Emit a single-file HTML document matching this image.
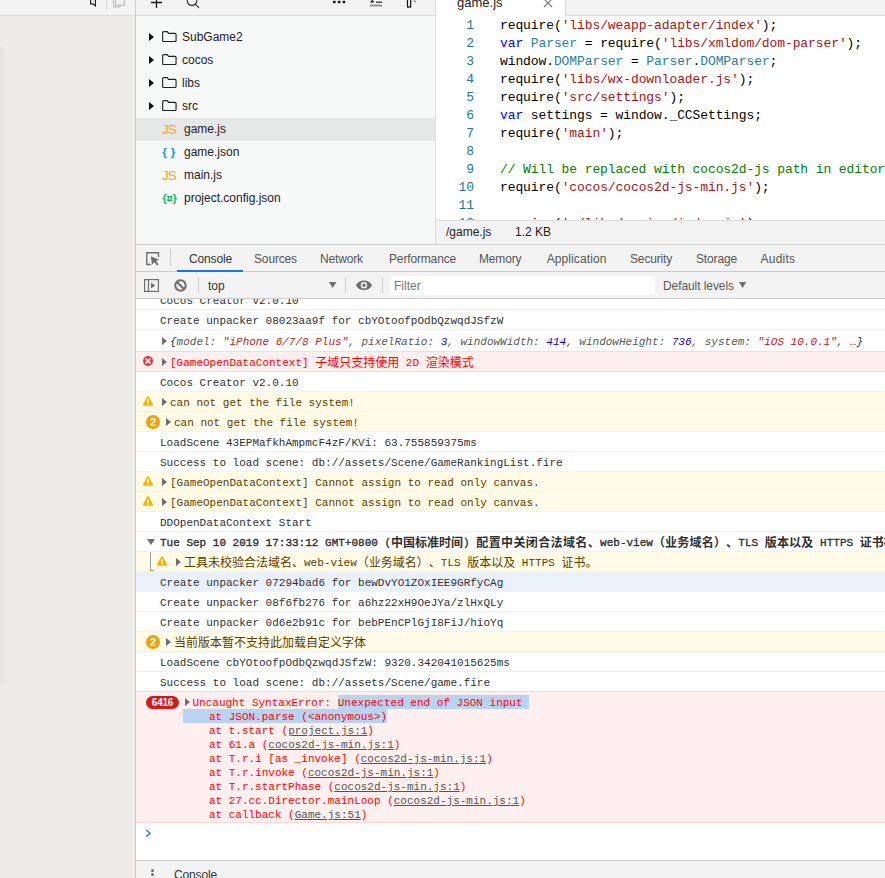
<!DOCTYPE html>
<html>
<head>
<meta charset="utf-8">
<title>devtools</title>
<style>
html,body{margin:0;padding:0;}
body{width:885px;height:878px;overflow:hidden;position:relative;background:#fff;font-family:"Liberation Sans","Noto Sans CJK SC",sans-serif;}
.abs{position:absolute;}
#left{left:0;top:0;width:135px;height:878px;background:#edece8;}
#lshadow{left:0;top:47px;width:9px;height:637px;border-radius:0 9px 9px 0;background:linear-gradient(to right,rgba(0,0,0,0.038),rgba(0,0,0,0));}
#lefttop{left:0;top:0;width:135px;height:15px;background:#f3f3f3;border-bottom:1px solid #dcdcdc;}
#vline{left:135px;top:0;width:1px;height:878px;background:#cacaca;}
#tree{left:136px;top:0;width:299px;height:244px;background:#f7f8f8;}
#treetop{left:136px;top:0;width:299px;height:15px;background:#f3f3f3;border-bottom:1px solid #dcdcdc;}
#treeright{left:435px;top:0;width:1px;height:244px;background:#dcdcdc;}
.trow{position:absolute;left:136px;width:299px;height:23px;font-size:12px;color:#222;line-height:23px;white-space:nowrap;}
.trow.sel{background:#e6e7e7;}
.trow .lbl{position:absolute;top:0;}
.tri{position:absolute;left:13px;top:7px;width:0;height:0;border-left:5px solid #111;border-top:4px solid transparent;border-bottom:4px solid transparent;}
.fold{position:absolute;left:25.6px;top:5px;}
.ficon{position:absolute;left:26px;top:0;font-size:12px;font-weight:bold;}
#editor{left:436px;top:0;width:449px;height:220px;background:#fff;overflow:hidden;}
#tabbar{left:436px;top:0;width:449px;height:15px;background:#f3f3f3;border-bottom:1px solid #dcdcdc;}
#tab{left:436px;top:0;width:129px;height:16px;background:#fff;border-right:1px solid #dcdcdc;overflow:hidden;}
.cl{position:absolute;left:0;width:449px;height:18px;line-height:18px;font-family:"Liberation Mono",monospace;font-size:13px;letter-spacing:-0.1px;white-space:pre;color:#000;}
.cl .n{position:absolute;left:0;width:38px;text-align:right;color:#237893;}
.cl .c{position:absolute;left:64px;}
.k{color:#0000ff;}
.s{color:#a31515;}
.t{color:#267f99;}
.g{color:#008000;}
#status{left:436px;top:220px;width:449px;height:23px;background:#f3f3f3;border-top:1px solid #dcdcdc;font-size:12px;color:#222;line-height:23px;white-space:nowrap;}
#hsep{left:136px;top:244px;width:749px;height:1px;background:#cfcfcf;}
#dtabs{left:136px;top:245px;width:749px;height:26px;background:#f3f3f3;border-bottom:1px solid #cdcdcd;font-size:12px;color:#333;line-height:29px;letter-spacing:-0.15px;white-space:nowrap;}
#dtabs span{position:absolute;top:0;}
#ctool{left:136px;top:272px;width:749px;height:26px;background:#f3f3f3;border-bottom:1px solid #cdcdcd;font-size:12px;color:#333;line-height:29px;white-space:nowrap;}
#console{left:136px;top:299px;width:749px;height:561px;background:#fff;overflow:hidden;}
.m{position:absolute;left:0;width:749px;height:19px;border-top:1px solid #f0f0f0;font-family:"Liberation Mono","Noto Sans CJK SC",monospace;font-size:11px;line-height:19px;white-space:pre;color:#303030;box-sizing:content-box;}
.m .x{position:absolute;left:24px;top:0;}
.m.w{background:#fffbe5;border-top:1px solid #fff5c2;color:#5c3c00;}
.m.e{background:#fff0f0;border-top:1px solid #ffd6d6;color:#ff0000;}
.m.sel{background:#ebf1fb;}
.arr{display:inline-block;width:0;height:0;border-left:5px solid #6e6e6e;border-top:3.5px solid transparent;border-bottom:3.5px solid transparent;margin-right:3px;vertical-align:0;}

.r{position:absolute;left:0;width:749px;border-top:1px solid #f0f0f0;font-family:"Liberation Mono","Noto Sans CJK SC",monospace;font-size:11px;line-height:20px;white-space:pre;color:#303030;box-sizing:border-box;height:20px;}
.r .x{position:absolute;top:1px;left:24px;}
.r.w{background:#fffbe6;border-top:1px solid #fff5c2;color:#5c3c00;}
.r.w + .r{border-top-color:#fff5c2;}
.r.e{background:#fff0f0;border-top:1px solid #ffd7d7;color:#ff0000;}
.r.e + .r{border-top-color:#ffd7d7;}
.r.sel{background:#ebf1fb;}
.cj{font-family:"Noto Sans CJK SC",sans-serif;font-size:12px;line-height:10px;font-weight:400;position:relative;top:0.5px;text-spacing-trim:space-all;font-kerning:none;}
.r b{font-weight:normal;-webkit-text-stroke:0.35px #303030;}
b .cj{font-weight:700;-webkit-text-stroke:0;}
.a{position:absolute;width:0;height:0;border-left:5px solid #6e6e6e;border-top:4px solid transparent;border-bottom:4px solid transparent;top:6px;}
.wi{position:absolute;top:4px;}
.badge{position:absolute;top:3px;left:10px;width:14px;height:14px;border-radius:7px;background:#e8a30c;color:#fff;font-family:"Liberation Sans",sans-serif;font-weight:bold;font-size:11px;line-height:14px;text-align:center;}
.it{font-style:italic;}
.num{color:#1c00cf;}
.str{color:#c41a16;}
.key{color:#565656;}
.lnk{color:#545454;text-decoration:underline;}
.hl{background:#b9d4f3;padding:2px 0 0 0;}

.ebadge{position:absolute;left:10px;top:3.5px;width:33px;height:13.5px;border-radius:7px;background:#cf1c1c;color:#fff;font-family:"Liberation Sans",sans-serif;font-weight:bold;font-size:10px;line-height:13px;text-align:center;letter-spacing:-0.2px;}
.stk{position:absolute;top:4px;line-height:14px;white-space:pre;}
.dn{position:absolute;left:10.5px;top:7px;width:0;height:0;border-top:6px solid #6e6e6e;border-left:4px solid transparent;border-right:4px solid transparent;}
.gl{position:absolute;left:14px;top:0;width:3px;height:18px;border-left:1px solid #9a9a9a;border-bottom:1px solid #9a9a9a;}
.prompt{position:absolute;left:9px;top:6px;width:5px;height:5px;}
#drawer{left:136px;top:860px;width:749px;height:18px;background:#f3f3f3;border-top:1px solid #c8c8c8;font-size:12px;color:#333;letter-spacing:-0.15px;}
</style>
</head>
<body>
<div id="left" class="abs"></div>
<div id="lshadow" class="abs"></div>
<div id="lefttop" class="abs"></div>
<div id="vline" class="abs"></div>
<div id="tree" class="abs"></div>
<div id="treetop" class="abs"></div>
<div id="treeright" class="abs"></div>


<!-- top toolbar icons -->
<svg class="abs" style="left:88px;top:0" width="40" height="12" viewBox="0 0 40 12">
  <path d="M2.6 -1 L2.6 3.9 L4.8 3.9 L7.4 5.9 L7.4 -1" fill="none" stroke="#222" stroke-width="1.2"/>
  <rect x="18" y="0" width="1" height="10.5" fill="#d8d8d8"/>
  <path d="M25.6 -1 L25.6 7 L32 7 L32 -1" fill="none" stroke="#b4b4b4" stroke-width="1"/>
  <path d="M27.6 -1 L27.6 5.2 L36.3 5.2 L36.3 -1 Z" fill="#f3f3f3" stroke="#b4b4b4" stroke-width="1"/>
</svg>
<svg class="abs" style="left:148px;top:0" width="60" height="12" viewBox="0 0 60 12">
  <path d="M8.5 0 L8.5 8 M3 2.5 L14 2.5" stroke="#1a1a1a" stroke-width="1.3" fill="none"/>
  <circle cx="44" cy="0.6" r="4.8" stroke="#2a2a2a" stroke-width="1.1" fill="none"/><path d="M47.3 4.2 L51 7.8" stroke="#2a2a2a" stroke-width="1.1" fill="none"/>
</svg>
<svg class="abs" style="left:330px;top:0" width="100" height="12" viewBox="0 0 100 12">
  <rect x="3" y="0.8" width="2.6" height="2.4" fill="#1a1a1a"/><rect x="7.8" y="0.8" width="2.6" height="2.4" fill="#1a1a1a"/><rect x="12.6" y="0.8" width="2.6" height="2.4" fill="#1a1a1a"/>
  <path d="M40 2.6 L44.5 2.6 L42.2 -0.5 Z" fill="#222"/>
  <rect x="46" y="1.6" width="6" height="1.2" fill="#222"/>
  <rect x="40" y="4.6" width="12" height="1.8" fill="#8a8a8a"/>
  <rect x="77.5" y="-1" width="3.2" height="8" fill="none" stroke="#111" stroke-width="1.2"/>
  <path d="M83.5 0 L86 2.3" stroke="#444" stroke-width="0.9"/>
</svg>
<div class="trow" style="top:26px"><i class="tri"></i><svg class="fold" width="15" height="11.2" viewBox="0 0 16 12" preserveAspectRatio="none"><path d="M0.7 1.8 Q0.7 0.7 1.8 0.7 L5.6 0.7 L7 2.6 L13.9 2.6 Q15 2.6 15 3.7 L15 10.2 Q15 11.3 13.9 11.3 L1.8 11.3 Q0.7 11.3 0.7 10.2 Z" fill="none" stroke="#222" stroke-width="1.2" stroke-linejoin="round"/></svg><span class="lbl" style="left:46px">SubGame2</span></div>
<div class="trow" style="top:49px"><i class="tri"></i><svg class="fold" width="15" height="11.2" viewBox="0 0 16 12" preserveAspectRatio="none"><path d="M0.7 1.8 Q0.7 0.7 1.8 0.7 L5.6 0.7 L7 2.6 L13.9 2.6 Q15 2.6 15 3.7 L15 10.2 Q15 11.3 13.9 11.3 L1.8 11.3 Q0.7 11.3 0.7 10.2 Z" fill="none" stroke="#222" stroke-width="1.2" stroke-linejoin="round"/></svg><span class="lbl" style="left:46px">cocos</span></div>
<div class="trow" style="top:72px"><i class="tri"></i><svg class="fold" width="15" height="11.2" viewBox="0 0 16 12" preserveAspectRatio="none"><path d="M0.7 1.8 Q0.7 0.7 1.8 0.7 L5.6 0.7 L7 2.6 L13.9 2.6 Q15 2.6 15 3.7 L15 10.2 Q15 11.3 13.9 11.3 L1.8 11.3 Q0.7 11.3 0.7 10.2 Z" fill="none" stroke="#222" stroke-width="1.2" stroke-linejoin="round"/></svg><span class="lbl" style="left:46px">libs</span></div>
<div class="trow" style="top:95px"><i class="tri"></i><svg class="fold" width="15" height="11.2" viewBox="0 0 16 12" preserveAspectRatio="none"><path d="M0.7 1.8 Q0.7 0.7 1.8 0.7 L5.6 0.7 L7 2.6 L13.9 2.6 Q15 2.6 15 3.7 L15 10.2 Q15 11.3 13.9 11.3 L1.8 11.3 Q0.7 11.3 0.7 10.2 Z" fill="none" stroke="#222" stroke-width="1.2" stroke-linejoin="round"/></svg><span class="lbl" style="left:46px">src</span></div>
<div class="trow sel" style="top:118px"><span class="ficon" style="color:#f5a623;font-weight:normal;font-size:13.5px;letter-spacing:-1px">JS</span><span class="lbl" style="left:48px">game.js</span></div>
<div class="trow" style="top:141px"><span class="ficon" style="color:#1e9be3;font-size:10.5px;left:26.5px;top:-0.5px;letter-spacing:0.8px;-webkit-text-stroke:0.3px #1e9be3">{ }</span><span class="lbl" style="left:48px">game.json</span></div>
<div class="trow" style="top:164px"><span class="ficon" style="color:#f5a623;font-weight:normal;font-size:13.5px;letter-spacing:-1px">JS</span><span class="lbl" style="left:48px">main.js</span></div>
<div class="trow" style="top:187px"><span class="ficon" style="color:#1db87a;letter-spacing:0.2px;font-size:10.5px;left:26.5px;top:-0.5px;-webkit-text-stroke:0.2px #1db87a">{¤}</span><span class="lbl" style="left:48px">project.config.json</span></div>

<div id="editor" class="abs">
<div class="cl" style="top:17px"><span class="n">1</span><span class="c">require(<span class="s">'libs/weapp-adapter/index'</span>);</span></div>
<div class="cl" style="top:35px"><span class="n">2</span><span class="c"><span class="k">var</span> <span class="t">Parser</span> = require(<span class="s">'libs/xmldom/dom-parser'</span>);</span></div>
<div class="cl" style="top:53px"><span class="n">3</span><span class="c">window.<span class="t">DOMParser</span> = <span class="t">Parser</span>.<span class="t">DOMParser</span>;</span></div>
<div class="cl" style="top:71px"><span class="n">4</span><span class="c">require(<span class="s">'libs/wx-downloader.js'</span>);</span></div>
<div class="cl" style="top:89px"><span class="n">5</span><span class="c">require(<span class="s">'src/settings'</span>);</span></div>
<div class="cl" style="top:107px"><span class="n">6</span><span class="c"><span class="k">var</span> settings = window._CCSettings;</span></div>
<div class="cl" style="top:125px"><span class="n">7</span><span class="c">require(<span class="s">'main'</span>);</span></div>
<div class="cl" style="top:143px"><span class="n">8</span><span class="c"></span></div>
<div class="cl" style="top:161px"><span class="n">9</span><span class="c"><span class="g">// Will be replaced with cocos2d-js path in editor</span></span></div>
<div class="cl" style="top:179px"><span class="n">10</span><span class="c">require(<span class="s">'cocos/cocos2d-js-min.js'</span>);</span></div>
<div class="cl" style="top:197px"><span class="n">11</span><span class="c"></span></div>
<div class="cl" style="top:215px"><span class="n">12</span><span class="c">require(<span class="s">'./libs/engine/index.js'</span>);</span></div>
</div>
<div id="tabbar" class="abs"></div>
<div id="tab" class="abs"><span style="position:absolute;left:21px;top:-5px;font-size:13px;line-height:15px;color:#222;white-space:nowrap">game.js</span><svg style="position:absolute;left:107px;top:-2px" width="10" height="10" viewBox="0 0 10 10"><path d="M1 1 L9 9 M9 1 L1 9" stroke="#777" stroke-width="1.1" fill="none"/></svg></div>
<div id="status" class="abs"><span style="position:absolute;left:10px">/game.js</span><span style="position:absolute;left:79px">1.2 KB</span></div>

<div id="hsep" class="abs"></div>
<div id="dtabs" class="abs">
<svg style="position:absolute;left:10px;top:7px" width="14" height="14" viewBox="0 0 14 14"><path d="M12.5 5 L12.5 0.8 L0.8 0.8 L0.8 12.5 L5 12.5" fill="none" stroke="#6e6e6e" stroke-width="1.4"/><path d="M4.8 4.2 L13 7.8 L10 9 L12.6 12.4 L11 13.6 L8.4 10.2 L6 12.6 Z" fill="#6e6e6e"/></svg>
<i style="position:absolute;left:34px;top:5px;width:1px;height:16px;background:#ccc"></i>
<i style="position:absolute;left:41px;top:25px;width:66px;height:2px;background:#1a73e8"></i>
<span style="left:53px">Console</span>
<span style="left:118px;color:#555">Sources</span>
<span style="left:184px;color:#555">Network</span>
<span style="left:253px;color:#555">Performance</span>
<span style="left:343px;color:#555">Memory</span>
<span style="left:410.7px;letter-spacing:0.1px;color:#555">Application</span>
<span style="left:494px;color:#555">Security</span>
<span style="left:560px;color:#555">Storage</span>
<span style="left:624.6px;letter-spacing:0.2px;color:#555">Audits</span>
</div>
<div id="ctool" class="abs">
<svg style="position:absolute;left:8px;top:7px" width="15" height="13" viewBox="0 0 15 13"><rect x="0.6" y="0.6" width="13.8" height="11.8" fill="none" stroke="#6e6e6e" stroke-width="1.2"/><path d="M4.5 0.6 L4.5 12.4" stroke="#6e6e6e" stroke-width="1.2"/><path d="M7 3.5 L11.2 6.5 L7 9.5 Z" fill="#6e6e6e"/></svg>
<svg style="position:absolute;left:38px;top:7px" width="13" height="13" viewBox="0 0 13 13"><circle cx="6.5" cy="6.5" r="5.2" fill="none" stroke="#6e6e6e" stroke-width="2"/><path d="M2.8 2.8 L10.2 10.2" stroke="#6e6e6e" stroke-width="2"/></svg>
<i style="position:absolute;left:62px;top:5px;width:1px;height:16px;background:#ccc"></i>
<svg style="position:absolute;left:193px;top:10px" width="8" height="6" viewBox="0 0 8 6"><path d="M0 0 L7.4 0 L3.7 6 Z" fill="#6e6e6e"/></svg>
<i style="position:absolute;left:209px;top:5px;width:1px;height:16px;background:#ccc"></i>
<svg style="position:absolute;left:220px;top:8px" width="16" height="11" viewBox="0 0 16 11"><path d="M0 5.3 C3 -1.2 13 -1.2 16 5.3 C13 11.8 3 11.8 0 5.3 Z" fill="#6e6e6e"/><circle cx="8" cy="5.2" r="3.2" fill="#f3f3f3"/><circle cx="8" cy="5.2" r="1.7" fill="#6e6e6e"/></svg>
<i style="position:absolute;left:246px;top:5px;width:1px;height:16px;background:#ccc"></i>
<i style="position:absolute;left:254px;top:4px;width:265px;height:19px;background:#fff"></i>
<svg style="position:absolute;left:602.6px;top:10px" width="8" height="6" viewBox="0 0 8 6"><path d="M0 0 L7.2 0 L3.6 6 Z" fill="#6e6e6e"/></svg>
<span style="position:absolute;left:72px;color:#333">top</span>
<span style="position:absolute;left:258px;color:#777">Filter</span>
<span style="position:absolute;left:527px;color:#5a5a5a;letter-spacing:-0.08px">Default levels</span>
</div>
<div id="console" class="abs">
<div class="r " style="top:-10px;height:20px"><span class="x" style="left:24px">Cocos Creator v2.0.10</span></div>
<div class="r " style="top:10px;height:20px"><span class="x" style="left:24px">Create unpacker 08023aa9f for cbYOtoofpOdbQzwqdJSfzW</span></div>
<div class="r " style="top:30px;height:22px;line-height:22px"><i class="a" style="left:26px;top:7px"></i><i></i><span class="x" style="left:34px"><span class="it">{<span class="key">model: </span><span class="str">"iPhone 6/7/8 Plus"</span><span class="key">, pixelRatio: </span><span class="num">3</span><span class="key">, windowWidth: </span><span class="num">414</span><span class="key">, windowHeight: </span><span class="num">736</span><span class="key">, system: </span><span class="str">"iOS 10.0.1"</span><span class="key">, …</span>}</span></span></div>
<div class="r e" style="top:52px;height:20px"><svg class="wi" style="left:7px;top:4px" width="10" height="10" viewBox="0 0 10 10"><circle cx="5" cy="5" r="5" fill="#e8373d"/><path d="M3.1 3.1 L6.9 6.9 M6.9 3.1 L3.1 6.9" stroke="#fff" stroke-width="1.5" stroke-linecap="round"/></svg><i class="a" style="left:26px"></i><span class="x" style="left:34px">[GameOpenDataContext] <span class="cj">子域只支持使用</span> 2D <span class="cj">渲染模式</span></span></div>
<div class="r " style="top:72px;height:20px"><span class="x" style="left:24px">Cocos Creator v2.0.10</span></div>
<div class="r w" style="top:92px;height:20px"><svg class="wi" style="left:7px" width="10" height="10" viewBox="0 0 10 10"><path d="M5 1.2 L9 8.8 L1 8.8 Z" fill="#f2b50c" stroke="#f2b50c" stroke-width="2" stroke-linejoin="round"/><rect x="4.3" y="3.2" width="1.4" height="3.3" fill="#fff"/><rect x="4.3" y="7.2" width="1.4" height="1.4" fill="#fff"/></svg><i class="a" style="left:26px"></i><span class="x" style="left:34px">can not get the file system!</span></div>
<div class="r w" style="top:112px;height:20px"><span class="badge">2</span><i class="a" style="left:30px"></i><span class="x" style="left:38px">can not get the file system!</span></div>
<div class="r " style="top:132px;height:20px"><span class="x" style="left:24px">LoadScene 43EPMafkhAmpmcF4zF/KVi: 63.755859375ms</span></div>
<div class="r " style="top:152px;height:20px"><span class="x" style="left:24px">Success to load scene: db://assets/Scene/GameRankingList.fire</span></div>
<div class="r w" style="top:172px;height:20px"><svg class="wi" style="left:7px" width="10" height="10" viewBox="0 0 10 10"><path d="M5 1.2 L9 8.8 L1 8.8 Z" fill="#f2b50c" stroke="#f2b50c" stroke-width="2" stroke-linejoin="round"/><rect x="4.3" y="3.2" width="1.4" height="3.3" fill="#fff"/><rect x="4.3" y="7.2" width="1.4" height="1.4" fill="#fff"/></svg><i class="a" style="left:26px"></i><span class="x" style="left:34px">[GameOpenDataContext] Cannot assign to read only canvas.</span></div>
<div class="r w" style="top:192px;height:20px"><svg class="wi" style="left:7px" width="10" height="10" viewBox="0 0 10 10"><path d="M5 1.2 L9 8.8 L1 8.8 Z" fill="#f2b50c" stroke="#f2b50c" stroke-width="2" stroke-linejoin="round"/><rect x="4.3" y="3.2" width="1.4" height="3.3" fill="#fff"/><rect x="4.3" y="7.2" width="1.4" height="1.4" fill="#fff"/></svg><i class="a" style="left:26px"></i><span class="x" style="left:34px">[GameOpenDataContext] Cannot assign to read only canvas.</span></div>
<div class="r " style="top:212px;height:20px"><span class="x" style="left:24px">DDOpenDataContext Start</span></div>
<div class="r " style="top:232px;height:20px"><i class="dn"></i><span class="x" style="left:24px"><b>Tue Sep 10 2019 17:33:12 GMT+0800 (<span class="cj">中国标准时间</span>) <span class="cj" style="letter-spacing:0.38px">配置中关闭合法域名、</span>web-view<span class="cj" style="letter-spacing:0.2px">（业务域名）、</span>TLS <span class="cj" style="letter-spacing:0.2px">版本以及</span> HTTPS <span class="cj">证书检查</span></b></span></div>
<div class="r w" style="top:252px;height:20px"><i class="gl"></i><svg class="wi" style="left:21px" width="10" height="10" viewBox="0 0 10 10"><path d="M5 1.2 L9 8.8 L1 8.8 Z" fill="#f2b50c" stroke="#f2b50c" stroke-width="2" stroke-linejoin="round"/><rect x="4.3" y="3.2" width="1.4" height="3.3" fill="#fff"/><rect x="4.3" y="7.2" width="1.4" height="1.4" fill="#fff"/></svg><i class="a" style="left:40px"></i><span class="x" style="left:48px"><span class="cj">工具未校验合法域名、</span>web-view<span class="cj">（业务域名）、</span>TLS <span class="cj">版本以及</span> HTTPS <span class="cj">证书。</span></span></div>
<div class="r sel" style="top:272px;height:20px"><span class="x" style="left:24px">Create unpacker 07294bad6 for bewDvYO1ZOxIEE9GRfyCAg</span></div>
<div class="r " style="top:292px;height:20px"><span class="x" style="left:24px">Create unpacker 08f6fb276 for a6hz22xH9OeJYa/zlHxQLy</span></div>
<div class="r " style="top:312px;height:20px"><span class="x" style="left:24px">Create unpacker 0d6e2b91c for bebPEnCPlGjI8FiJ/hioYq</span></div>
<div class="r w" style="top:332px;height:20px"><span class="badge">2</span><i class="a" style="left:30px"></i><span class="x" style="left:38px"><span class="cj">当前版本暂不支持此加载自定义字体</span></span></div>
<div class="r " style="top:352px;height:20px"><span class="x" style="left:24px">LoadScene cbYOtoofpOdbQzwqdJSfzW: 9320.342041015625ms</span></div>
<div class="r " style="top:372px;height:20px"><span class="x" style="left:24px">Success to load scene: db://assets/Scene/game.fire</span></div>
<div class="r e" style="top:392px;height:131px"><span class="ebadge">6416</span><i class="a" style="left:49px"></i><div class="stk" style="left:46.5px"><span style="margin-left:10px"></span>Uncaught SyntaxError: <span class="hl">Unexpected end of JSON input </span>
<span class="hl">    at JSON.parse (&lt;anonymous&gt;)</span>
    at t.start (<span class="lnk">project.js:1</span>)
    at 61.a (<span class="lnk">cocos2d-js-min.js:1</span>)
    at T.r.i [as _invoke] (<span class="lnk">cocos2d-js-min.js:1</span>)
    at T.r.invoke (<span class="lnk">cocos2d-js-min.js:1</span>)
    at T.r.startPhase (<span class="lnk">cocos2d-js-min.js:1</span>)
    at 27.cc.Director.mainLoop (<span class="lnk">cocos2d-js-min.js:1</span>)
    at callback (<span class="lnk">Game.js:51</span>)</div></div>
<div class="r " style="top:523px;height:37px"><svg style="position:absolute;left:9px;top:5.5px" width="7" height="9" viewBox="0 0 7 9"><path d="M1.2 1 L5 4.3 L1.2 7.6" fill="none" stroke="#3b78e7" stroke-width="1.5"/></svg></div>
</div>
<div id="drawer" class="abs"><i style="position:absolute;left:15px;top:7.5px;width:3px;height:3px;border-radius:1.5px;background:#6e6e6e"></i><i style="position:absolute;left:15px;top:12.3px;width:3px;height:3px;border-radius:1.5px;background:#6e6e6e"></i><span style="position:absolute;left:38px;top:7px;line-height:14px">Console</span></div>
</body>
</html>
